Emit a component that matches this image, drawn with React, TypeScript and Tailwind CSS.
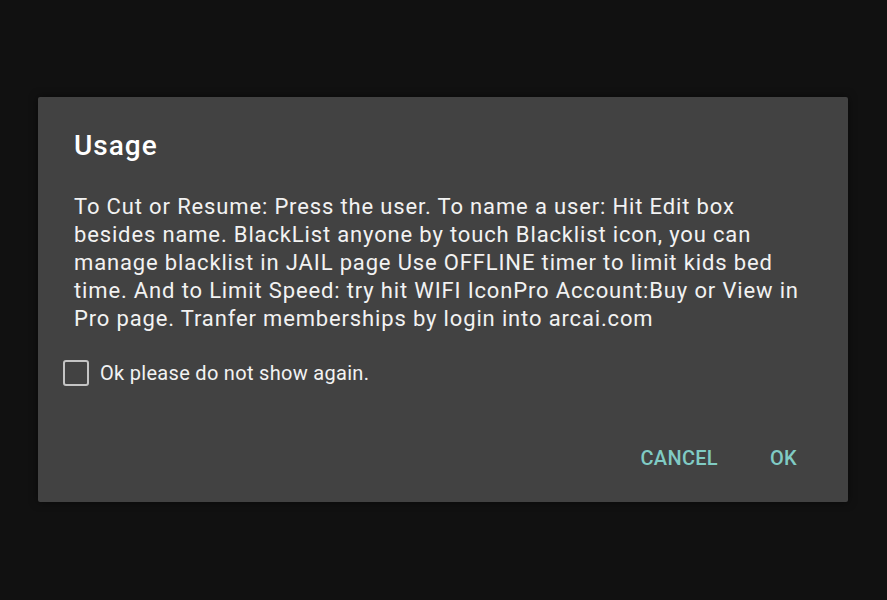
const lines = [
  "To Cut or Resume: Press the user. To name a user: Hit Edit box",
  "besides name. BlackList anyone by touch Blacklist icon, you can",
  "manage blacklist in JAIL page Use OFFLINE timer to limit kids bed",
  "time. And to Limit Speed: try hit WIFI IconPro Account:Buy or View in",
  "Pro page. Tranfer memberships by login into arcai.com",
]

export default function App() {
  return (
    <div className="h-[600px] w-full bg-[#111111] pt-[97px] pl-[38px] font-['Roboto',sans-serif]">
      <div className="w-[810px] h-[405px] rounded-[2px] bg-[#424242] flex flex-col shadow-[0_0_8px_rgba(0,0,0,0.5)]">
        <h2 className="pl-[36px] pt-[30px] text-[28px] leading-[38px] tracking-[1px] font-medium text-white">Usage</h2>
        <p className="pl-[36px] pr-[20px] mt-[28px] text-[22px] leading-[28px] tracking-[0.85px] text-[#f2f2f2]">
          {lines.map((l) => (
            <span key={l} className="block whitespace-nowrap">{l}</span>
          ))}
        </p>
        <label className="flex items-center gap-[11px] pl-[25px] mt-[25px]">
          <span className="w-[26px] h-[26px] rounded-[3px] border-2 border-[#c4c4c4]" />
          <span className="text-[20px] tracking-[0.3px] text-[#f2f2f2]">Ok please do not show again.</span>
        </label>
        <div className="flex justify-end items-center gap-[52px] pr-[51px] mt-auto mb-[29px]">
          <button className="text-[20px] font-medium tracking-[0.3px] text-[#80cbc4]">CANCEL</button>
          <button className="text-[20px] font-medium tracking-[0.3px] text-[#80cbc4]">OK</button>
        </div>
      </div>
    </div>
  )
}
